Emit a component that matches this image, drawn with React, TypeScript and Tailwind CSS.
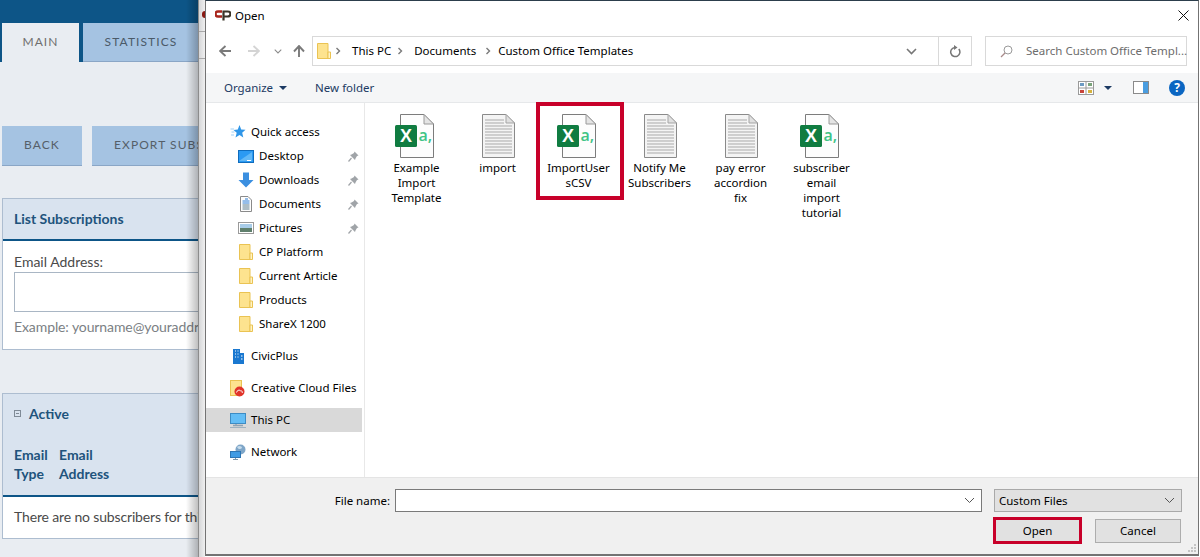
import type { ReactNode } from 'react';

const Chevron = ({ className = '' }: { className?: string }) => (
  <svg width="8" height="8" viewBox="0 0 8 8" className={className}>
    <path d="M2.5 1 L5.5 4 L2.5 7" fill="none" stroke="#7a7a7a" strokeWidth="1.4" />
  </svg>
);

const ChevronDown = ({ w = 11, color = '#6f6f6f', sw = 1.2 }: { w?: number; color?: string; sw?: number }) => (
  <svg width={w} height="7" viewBox="0 0 11 7">
    <path d="M1 1 L5.5 5.5 L10 1" fill="none" stroke={color} strokeWidth={sw} />
  </svg>
);

const Caret = () => (
  <svg width="8" height="4" viewBox="0 0 8 4">
    <path d="M0 0 H8 L4 4 Z" fill="#1c3a63" />
  </svg>
);

const NavArrow = ({ dir, color }: { dir: 'left' | 'right' | 'up'; color: string }) => {
  const d =
    dir === 'left'
      ? 'M12 6 H1.5 M6.5 1 L1 6 L6.5 11'
      : dir === 'right'
        ? 'M0 6 H10.5 M5.5 1 L11 6 L5.5 11'
        : 'M6 12 V1.5 M1 6.5 L6 1 L11 6.5';
  return (
    <svg width="12" height="12" viewBox="0 0 12 12">
      <path d={d} fill="none" stroke={color} strokeWidth="1.9" />
    </svg>
  );
};

const FolderIcon = ({ w = 14, h = 16 }: { w?: number; h?: number }) => (
  <svg width={w} height={h} viewBox="0 0 14 16">
    <path d="M0.5 0.5 H11 V15.5 H0.5 Z" fill="#fde38f" stroke="#eac353" />
    <path d="M11 9 H13.5 V15.5 H11 Z" fill="#fff3c4" stroke="#eac353" />
  </svg>
);

const PinIcon = () => (
  <svg width="11" height="11" viewBox="0 0 11 11">
    <path d="M6.5 0.5 L10.5 4.5 L9 5 L7.5 7.5 L7 9 L2 4 L3.5 3.5 L6 2 Z" fill="#a0a4a8" />
    <path d="M3.5 7 L0.5 10.5" stroke="#a0a4a8" strokeWidth="1.2" />
  </svg>
);

const StarIcon = () => (
  <svg width="16" height="16" viewBox="0 0 16 16">
    <path d="M9.5 1 L11.2 5.5 L15.5 5.8 L12.2 8.8 L13.3 13.5 L9.5 11 L5.5 13.5 L6.7 8.8 L3.5 6 L7.8 5.5 Z" fill="#2f96e8" />
    <path d="M0.5 5 H4 M1.5 8 H4.5 M1 11 H4" stroke="#9fd0f5" strokeWidth="1" />
  </svg>
);

const DesktopIcon = () => (
  <svg width="16" height="13" viewBox="0 0 16 13">
    <rect x="0.5" y="0.5" width="15" height="12" fill="#2b9af3" stroke="#0f6cbd" />
    <path d="M1 11 L14 2 V11 Z" fill="#61b8f7" />
    <path d="M9 10.5 H13" stroke="#ffffff" strokeWidth="1" />
  </svg>
);

const DownloadIcon = () => (
  <svg width="16" height="16" viewBox="0 0 16 16">
    <path d="M5 0.5 H11 V8 H15.5 L8 15.5 L0.5 8 H5 Z" fill="#3b8fe0" />
  </svg>
);

const DocumentsIcon = () => (
  <svg width="12" height="16" viewBox="0 0 12 16">
    <path d="M0.5 0.5 H8 L11.5 4 V15.5 H0.5 Z" fill="#fdfdfd" stroke="#8a8a8a" />
    <path d="M5 3 H8 M2.5 5 H9.5 M2.5 7 H9.5" stroke="#2f7fd6" strokeWidth="1" />
    <path d="M2.5 9 H9.5 M2.5 11 H9.5 M2.5 13 H9.5" stroke="#5f7f8f" strokeWidth="1" />
  </svg>
);

const PicturesIcon = () => (
  <svg width="16" height="12" viewBox="0 0 16 12">
    <rect x="0.5" y="0.5" width="15" height="11" fill="#fff" stroke="#9a9a9a" />
    <rect x="2" y="2" width="12" height="4" fill="#a8cce8" />
    <rect x="2" y="6" width="12" height="4" fill="#5f7f6c" />
  </svg>
);

const BuildingIcon = () => (
  <svg width="11" height="15" viewBox="0 0 11 15">
    <path d="M0 0 H7 V4 H11 V15 H0 Z" fill="#1a78d0" />
    <path d="M2 2 H3 M4.5 2 H5.5 M2 5 H3 M4.5 5 H5.5 M2 8 H3 M4.5 8 H5.5 M8 7 H9.5 M8 10 H9.5" stroke="#fff" strokeWidth="1.2" />
  </svg>
);

const CloudFolderIcon = () => (
  <svg width="16" height="17" viewBox="0 0 16 17">
    <rect x="0.5" y="0.5" width="11" height="15" fill="#fde38f" stroke="#eac353" />
    <circle cx="9.5" cy="11.5" r="5" fill="#e0342a" />
    <path d="M6.5 12.5 C7 10 10 9.5 10.5 11 C12 10.5 13 12 12 13" fill="none" stroke="#fff" strokeWidth="1" />
  </svg>
);

const MonitorIcon = () => (
  <svg width="16" height="15" viewBox="0 0 16 15">
    <rect x="0.5" y="0.5" width="15" height="10" fill="#63bdf5" stroke="#3d8cc4" />
    <path d="M6 11 V13 M3 12.5 H13" stroke="#8fa3b3" strokeWidth="1.3" />
    <path d="M0 14.5 H16" stroke="#9fb2c0" strokeWidth="1" />
  </svg>
);

const NetworkIcon = () => (
  <svg width="16" height="16" viewBox="0 0 16 16">
    <circle cx="10.5" cy="5.5" r="5" fill="#7fa6c8" />
    <path d="M7 3 C9 1 12 2 12 4 C10 6 8 5 7 3 Z" fill="#c6dcec" />
    <rect x="0.5" y="7.5" width="10" height="6" fill="#3f9be4" stroke="#2d76b5" />
    <path d="M5.5 14 V15.5 M3 15.5 H8" stroke="#7f99ad" strokeWidth="1" />
  </svg>
);

const ExcelIcon = () => (
  <svg width="48" height="48" viewBox="0 0 48 48">
    <path d="M7.5 2.5 H31 L40.5 12 V45.5 H7.5 Z" fill="#fdfdfd" stroke="#7c7c7c" />
    <path d="M31 2.5 V12 H40.5 Z" fill="#e4e4e4" stroke="#9a9a9a" />
    <rect x="2" y="13" width="22" height="22" rx="1.5" fill="#107c41" />
    <text x="13" y="30" textAnchor="middle" fontSize="18" fontWeight="700" fill="#fff" fontFamily="'Liberation Sans', sans-serif">X</text>
    <text x="25.5" y="29" fontSize="16" fontWeight="600" fill="#41c486" fontFamily="'Open Sans', sans-serif">a,</text>
  </svg>
);

const TextDocIcon = () => (
  <svg width="48" height="48" viewBox="0 0 48 48">
    <path d="M8.5 2.5 H32 L40.5 11 V45.5 H8.5 Z" fill="#f4f4f4" stroke="#8a8a8a" />
    <path d="M32 2.5 V11 H40.5 Z" fill="#e0e0e0" stroke="#a5a5a5" />
    <path
      d="M11 8 H30 M11 11 H30 M11 14 H38 M11 17 H38 M11 20 H38 M11 23 H38 M11 26 H38 M11 29 H38 M11 32 H38 M11 35 H38 M11 38 H38 M11 41 H38"
      stroke="#a9a9a9"
      strokeWidth="1"
    />
  </svg>
);

function NavRow({ icon, label, pinned, sub, active }: { icon: ReactNode; label: string; pinned?: boolean; sub?: boolean; active?: boolean }) {
  return (
    <div className={`mr-[2px] flex h-6 items-center pr-[3px] ${sub ? 'pl-[32px] gap-[5px]' : 'pl-[24px] gap-[5px]'} ${active ? 'bg-[#d9d9d9]' : ''}`}>
      <span className="flex w-4 shrink-0 items-center justify-center">{icon}</span>
      <span className="flex-1 whitespace-nowrap text-black">{label}</span>
      {pinned && <PinIcon />}
    </div>
  );
}

function FileItem({ name, excel, selected }: { name: string; excel?: boolean; selected?: boolean }) {
  return (
    <div className="relative flex w-[81px] shrink-0 flex-col items-center pt-[9px]">
      {excel ? <ExcelIcon /> : <TextDocIcon />}
      <div className="w-[66px] text-center leading-[15px] text-black [overflow-wrap:anywhere]">{name}</div>
      {selected && <div className="absolute -top-px left-[-2px] h-[98px] w-[88px] border-4 border-[#c8002a]" />}
    </div>
  );
}

export default function App() {
  return (
    <div className="flex h-[557px] w-[1200px] overflow-hidden bg-white">
      {/* page behind the dialog */}
      <div className="relative h-full w-[198px] shrink-0 overflow-hidden bg-[#e9edf2] font-['Lato',sans-serif] text-[14px]">
        <div className="h-[62px] w-[500px] bg-[#0d5587] pt-[23px] pl-[2px]">
          <div className="flex h-[39px] gap-1 text-[12px] tracking-[0.09em]">
            <div className="flex w-[77px] items-center justify-center border-b border-transparent bg-[#e9edf2] text-[#6f6f6f]">MAIN</div>
            <div className="flex w-[116px] items-center justify-center border-b border-[#8aa6c6] bg-[#a5c3e2] text-[#4b5a68]">STATISTICS</div>
          </div>
        </div>
        <div className="mt-[64px] flex w-[500px] gap-[10px] pl-[2px] text-[12px] leading-[38px] tracking-[0.09em] text-[#555f69]">
          <div className="h-10 w-20 border-b border-[#8aa6c6] bg-[#a5c3e2] text-center">BACK</div>
          <div className="h-10 w-[170px] whitespace-nowrap border-b border-[#8aa6c6] bg-[#a5c3e2] pl-[22px]">EXPORT SUBSCRIBERS</div>
        </div>
        <div className="mt-8 ml-[2px] h-[152px] w-[500px] border border-[#adbdd0] bg-white">
          <div className="flex h-[42px] items-center border-b-2 border-[#0d5587] bg-[#d9e3ef] pb-px pl-[11px] font-bold text-[#21537c]">List Subscriptions</div>
          <div className="pl-[11px] pt-[11px] text-[#4a4a4a]">
            <div className="leading-5">Email Address:</div>
            <div className="h-10 w-[400px] border border-[#a9b6c4] bg-white" />
            <div className="mt-[5px] whitespace-nowrap leading-5 tracking-[-0.1px] text-[#7b7f84]">Example: yourname@youraddress.com</div>
          </div>
        </div>
        <div className="mt-[43px] ml-[2px] h-[146px] w-[500px] border border-[#adbdd0] bg-white">
          <div className="h-[103px] border-b-2 border-[#0d5587] bg-[#d9e3ef] pl-[11px] pt-[9px] font-bold text-[#21537c]">
            <div className="flex h-5 items-center gap-2">
              <span className="flex h-[7px] w-[7px] items-center justify-center border border-[#7f8a96]">
                <span className="h-px w-[3px] bg-[#7f8a96]" />
              </span>
              <span>Active</span>
            </div>
            <div className="mt-[22px] flex gap-[14px] leading-[19px]">
              <div className="w-[31px]">Email<br />Type</div>
              <div>Email<br />Address</div>
            </div>
          </div>
          <div className="whitespace-nowrap pl-[11px] pt-[10px] leading-5 tracking-[-0.15px] text-[#4a4a4a]">There are no subscribers for this list</div>
        </div>
        <div className="absolute inset-y-0 right-0 w-[12px] bg-gradient-to-r from-transparent to-black/25" />
      </div>

      {/* window behind the dialog */}
      <div className="relative flex h-full w-[7px] shrink-0 flex-col border-l border-[#8c8c8c] bg-gradient-to-r from-[#d5d6d8] to-[#f0f0f0]">
        <div className="h-px w-full translate-y-[31px] bg-[#a8a8a8]" />
        <div className="h-px w-full translate-y-[57px] bg-[#a8a8a8]" />
        <div className="absolute top-[11px] right-0 h-[7px] w-[3px] rounded-l-full bg-[#8a1a14]" />
      </div>

      {/* Open dialog */}
      <div className="flex h-[556px] w-[994px] shrink-0 flex-col border border-b-2 border-[#737373] border-t-[#2c3e4c] bg-white font-['Noto_Sans',sans-serif] text-[11.5px] text-black">
        <div className="flex h-[31px] shrink-0 items-center pb-[2px] pl-[9px] pr-[9px]">
          <svg width="16" height="11" viewBox="0 0 16 11" className="shrink-0">
            <path d="M7 1.5 H3 C1.5 1.5 0.5 2.5 0.5 4 C0.5 5.5 1.5 6.5 3 6.5 H7" fill="none" stroke="#a8251c" strokeWidth="2.4" />
            <path d="M8.5 10.5 V1.5 H12.5 C14.5 1.5 15.5 2.5 15.5 4 C15.5 5.5 14.5 6.5 12.5 6.5 H8.5" fill="none" stroke="#3b3528" strokeWidth="2.2" />
          </svg>
          <span className="ml-[4px] flex-1">Open</span>
          <svg width="11" height="11" viewBox="0 0 11 11">
            <path d="M0.5 0.5 L10.5 10.5 M10.5 0.5 L0.5 10.5" stroke="#111" strokeWidth="1" />
          </svg>
        </div>

        <div className="flex h-[41px] shrink-0 items-start pt-[4px] pl-[13px]">
          <div className="flex h-[30px] w-[93px] items-center">
            <NavArrow dir="left" color="#7a7a7a" />
            <span className="ml-[17px]"><NavArrow dir="right" color="#d4d4d4" /></span>
            <span className="ml-[14px]"><ChevronDown w={8} color="#8a8a8a" sw={1.4} /></span>
            <span className="ml-[11px]"><NavArrow dir="up" color="#7a7a7a" /></span>
          </div>
          <div className="flex h-[30px] w-[660px] items-center border border-[#d9d9d9] pl-[4px]">
            <FolderIcon />
            <Chevron className="ml-[3px]" />
            <span className="ml-[10px] whitespace-nowrap">This PC</span>
            <Chevron className="ml-[5px]" />
            <span className="ml-[10px] whitespace-nowrap">Documents</span>
            <Chevron className="ml-[8px]" />
            <span className="ml-[6px] flex-1 whitespace-nowrap">Custom Office Templates</span>
            <span className="flex h-full w-[33px] items-center justify-start pl-[1px]"><ChevronDown color="#777" sw={1.6} /></span>
            <span className="flex h-full w-[33px] items-center justify-center border-l border-[#d9d9d9]">
              <svg width="12" height="13" viewBox="0 0 12 13">
                <path d="M9.8 4 A4.6 4.6 0 1 1 6 2.4" fill="none" stroke="#777" strokeWidth="1.5" />
                <path d="M5 0 L8.5 2.5 L5 5 Z" fill="#777" />
              </svg>
            </span>
          </div>
          <div className="ml-[13px] flex h-[30px] w-[202px] items-center border border-[#d9d9d9] pl-[14px] text-[#6d6d6d]">
            <svg width="13" height="13" viewBox="0 0 13 13" className="shrink-0">
              <circle cx="8" cy="5" r="4" fill="none" stroke="#9a9a9a" />
              <path d="M5 8 L1 12" stroke="#a88a8a" strokeWidth="1.2" />
            </svg>
            <span className="ml-[13px] whitespace-nowrap">Search Custom Office Templ...</span>
          </div>
        </div>

        <div className="flex h-[30px] shrink-0 items-center border-b border-[#e6e8ea] bg-[#f5f6f7] pl-[18px] text-[#1c3a63]">
          <span>Organize</span>
          <span className="ml-[6px]"><Caret /></span>
          <span className="ml-[28px] flex-1">New folder</span>
          <svg width="16" height="14" viewBox="0 0 16 14">
            <rect x="0.5" y="0.5" width="15" height="13" fill="#fff" stroke="#9a9a9a" />
            <path d="M8 0 V14 M0 7 H16" stroke="#9a9a9a" />
            <rect x="2" y="2" width="4" height="3" fill="#6d9bc3" />
            <rect x="10" y="2" width="4" height="3" fill="#7aa37a" />
            <rect x="2" y="9" width="4" height="3" fill="#c8443a" />
            <rect x="10" y="9" width="4" height="3" fill="#d6b23c" />
          </svg>
          <span className="ml-[10px]"><Caret /></span>
          <svg width="16" height="13" viewBox="0 0 16 13" className="ml-[21px]">
            <rect x="0.5" y="0.5" width="15" height="12" fill="#fff" stroke="#8a8a8a" />
            <rect x="10" y="1" width="5" height="11" fill="#4a9de0" />
          </svg>
          <span className="ml-[20px] mr-[13px] flex h-4 w-4 items-center justify-center rounded-full bg-[#0b66c2] text-[12px] font-bold text-white">?</span>
        </div>

        <div className="flex min-h-0 flex-1">
          <div className="w-[159px] shrink-0 border-r border-[#e8e8e8] pt-[17px]">
            <NavRow icon={<StarIcon />} label="Quick access" />
            <NavRow sub icon={<DesktopIcon />} label="Desktop" pinned />
            <NavRow sub icon={<DownloadIcon />} label="Downloads" pinned />
            <NavRow sub icon={<DocumentsIcon />} label="Documents" pinned />
            <NavRow sub icon={<PicturesIcon />} label="Pictures" pinned />
            <NavRow sub icon={<FolderIcon />} label="CP Platform" />
            <NavRow sub icon={<FolderIcon />} label="Current Article" />
            <NavRow sub icon={<FolderIcon />} label="Products" />
            <NavRow sub icon={<FolderIcon />} label="ShareX 1200" />
            <div className="mt-2"><NavRow icon={<BuildingIcon />} label="CivicPlus" /></div>
            <div className="mt-2"><NavRow icon={<CloudFolderIcon />} label="Creative Cloud Files" /></div>
            <div className="mt-2"><NavRow active icon={<MonitorIcon />} label="This PC" /></div>
            <div className="mt-2"><NavRow icon={<NetworkIcon />} label="Network" /></div>
          </div>
          <div className="flex flex-1 items-start pl-[11px]">
            <FileItem excel name="Example Import Template" />
            <FileItem name="import" />
            <FileItem excel selected name="ImportUsersCSV" />
            <FileItem name="Notify Me Subscribers" />
            <FileItem name="pay error accordion fix" />
            <FileItem excel name="subscriber email import tutorial" />
          </div>
        </div>

        <div className="relative flex h-[77px] shrink-0 flex-col border-t border-[#e4e4e4] bg-[#f0f0f0] pr-[16px] pt-[11px]">
          <div className="flex h-[23px] items-center justify-end">
            <span>File name:</span>
            <div className="ml-[5px] flex h-full w-[587px] items-center justify-end border border-[#7a7a7a] bg-white pr-[6px]">
              <ChevronDown color="#555" sw={1} />
            </div>
            <div className="ml-[12px] flex h-full w-[188px] items-center justify-between border border-[#a9a9a9] bg-[#e1e1e1] pl-[4px] pr-[6px]">
              <span>Custom Files</span>
              <ChevronDown color="#555" sw={1} />
            </div>
          </div>
          <div className="mt-[5px] flex items-center justify-end">
            <div className="flex h-[27px] w-[89px] items-center justify-center border-[3px] border-[#c8002a] bg-[#e1e1e1]">Open</div>
            <div className="ml-[13px] mr-[1px] flex h-[24px] w-[86px] items-center justify-center border border-[#adadad] bg-[#e1e1e1]">Cancel</div>
          </div>
          <svg width="10" height="10" viewBox="0 0 10 10" className="absolute right-[1px] bottom-[1px]">
            <path d="M7 1 h2 v2 h-2 Z M4 4 h2 v2 h-2 Z M7 4 h2 v2 h-2 Z M1 7 h2 v2 h-2 Z M4 7 h2 v2 h-2 Z M7 7 h2 v2 h-2 Z" fill="#c4c4c4" />
          </svg>
        </div>
      </div>
      <div className="w-px shrink-0 bg-white" />
    </div>
  );
}
